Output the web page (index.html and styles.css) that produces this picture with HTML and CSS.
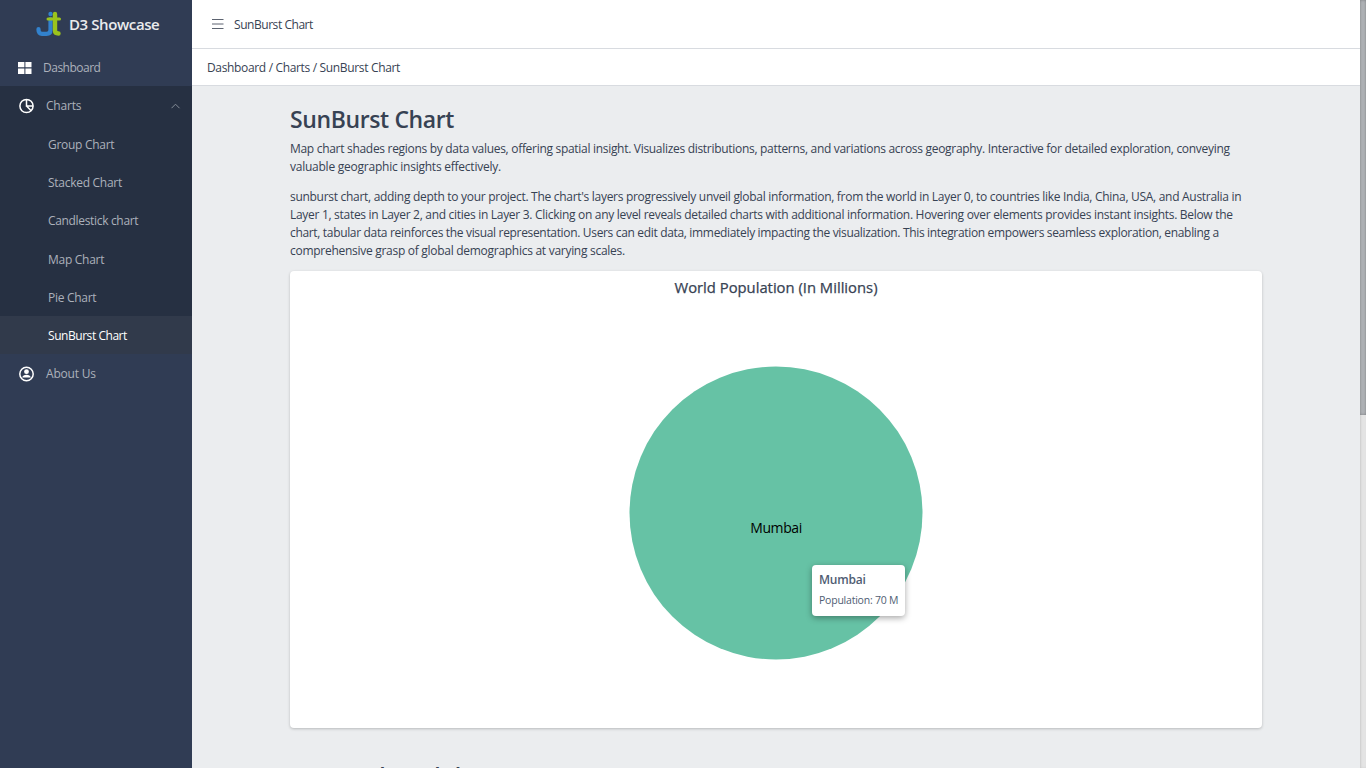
FILE: index.html
```html
<!DOCTYPE html>
<html lang="en">
<head>
<meta charset="utf-8">
<title>D3 Showcase</title>
<link rel="stylesheet" href="styles.css">
</head>
<body>
<div class="app">
  <aside class="sidebar">
    <div class="brand">
      <svg class="logo" width="26" height="26" viewBox="0 0 26 26" fill="none" stroke-linecap="round" stroke-linejoin="round"><path d="M14.500 8V19Q14.500 22.800 10.500 22.800H6Q2.500 22.800 2.500 19V18" stroke="#3282cd" stroke-width="4.200" /><circle cx="14.500" cy="3" r="2.200" fill="#3282cd"/><path d="M19 3V19.500Q19 22.500 22.500 22.500" stroke="#9bc31c" stroke-width="4.400"/><path d="M12 8H23.500" stroke="#9bc31c" stroke-width="3"/></svg>
      <span class="brand-name">D3 Showcase</span>
    </div>
    <nav>
      <a class="item dashboard"><svg width="14" height="12" viewBox="0 0 14 12" fill="#fff"><path d="M0 0h6.400v5.300H0zM7.400 0H13.500v5.300H7.400zM0 6.500h6.400V12H0zM7.400 6.500H13.500V12H7.400z"/></svg><span>Dashboard</span></a>
      <div class="group">
        <a class="item"><svg width="16" height="16" viewBox="0 0 16 16" fill="none" stroke="#fff" stroke-width="1.500"><circle cx="8.500" cy="8" r="6.600"/><path d="M8.500 1.400V8H15.100M8.500 8l4.700 4.700"/></svg><span>Charts</span><svg class="chevron" width="10" height="6" viewBox="0 0 10 6" fill="none" stroke="#858d98"><path d="M0.500 5.200L4.500 1.200L8.500 5.200"/></svg></a>
        <a class="sub">Group Chart</a>
        <a class="sub">Stacked Chart</a>
        <a class="sub candle">Candlestick chart</a>
        <a class="sub">Map Chart</a>
        <a class="sub">Pie Chart</a>
        <a class="sub active">SunBurst Chart</a>
      </div>
      <a class="item"><svg width="16" height="16" viewBox="0 0 16 16"><circle cx="8.500" cy="8" r="6.700" fill="none" stroke="#fff" stroke-width="1.500"/><circle cx="8.500" cy="5.700" r="2.400" fill="#fff"/><path d="M4.200 11.500Q5 8.700 8.500 8.700T12.800 11.500Z" fill="#fff"/></svg><span>About Us</span></a>
    </nav>
  </aside>
  <main class="main">
    <header class="topbar"><svg width="12" height="12" viewBox="0 0 12 12" stroke="#5c6370"><path d="M0 1.500h11.500M0 6h11.500M0 10.500h11.500"/></svg><span>SunBurst Chart</span></header>
    <div class="crumbs">Dashboard / Charts / SunBurst Chart</div>
    <div class="content">
      <h1>SunBurst Chart</h1>
      <p><span class="l1">Map chart shades regions by data values, offering spatial insight. Visualizes distributions, patterns, and variations across geography. Interactive for detailed exploration, conveying</span><br><span class="l2">valuable geographic insights effectively.</span></p>
      <p><span class="l3">sunburst chart, adding depth to your project. The chart's layers progressively unveil global information, from the world in Layer 0, to countries like India, China, USA, and Australia in</span><br><span class="l4">Layer 1, states in Layer 2, and cities in Layer 3. Clicking on any level reveals detailed charts with additional information. Hovering over elements provides instant insights. Below the</span><br><span class="l5">chart, tabular data reinforces the visual representation. Users can edit data, immediately impacting the visualization. This integration empowers seamless exploration, enabling a</span><br><span class="l6">comprehensive grasp of global demographics at varying scales.</span></p>
      <section class="card">
        <h2>World Population (In Millions)</h2>
        <div class="chart">
          <svg width="294" height="294" viewBox="0 0 294 294"><circle cx="147" cy="147" r="146.500" fill="#66c2a5"/><text x="147" y="167" text-anchor="middle" class="chart-label">Mumbai</text></svg>
          <div class="tooltip"><b>Mumbai</b><span>Population: 70 M</span></div>
        </div>
      </section>
      <h3>Source c<span class="wide">hart lab</span></h3>
    </div>
  </main>
  <div class="scrollbar"><div class="thumb"></div></div>
</div>
</body>
</html>
```
FILE: styles.css
```css
* { box-sizing: border-box; }
body { margin: 0; height: 768px; overflow: hidden; font-family: "Open Sans", "Noto Sans", sans-serif; font-size: 12px; line-height: 18px; color: #374253; }
.app { display: flex; height: 768px; overflow: hidden; }
.sidebar { width: 192px; flex: none; background: #303c54; color: #acb1bb; }
.brand { height: 48px; display: flex; align-items: center; padding-left: 36px; gap: 7px; }
.brand-name { color: #eaebed; font-weight: 600; font-size: 15px; letter-spacing: -0.4px; }
.item { display: flex; align-items: center; height: 38px; padding: 1px 0 0 18px; gap: 12px; }
.item > span { padding-top: 1px; letter-spacing: -0.2px; }
.dashboard { gap: 11px; }
.dashboard > span { letter-spacing: -0.5px; }
.chevron { margin-left: auto; margin-right: 11px; }
.group { background: #263042; }
.sub { display: flex; align-items: center; height: 38.340px; padding: 2px 0 0 48px; letter-spacing: -0.280px; }
.candle { letter-spacing: -0.330px; }
.group .item { height: 38.400px; }
.active { background: #313a4b; color: #fff; letter-spacing: -0.450px; height: 38px; }
.main { flex: 1; min-width: 0; background: #ebedef; }
.topbar { height: 49px; background: #fff; border-bottom: 1px solid #d8dbe0; display: flex; align-items: center; padding-left: 20px; gap: 10px; letter-spacing: -0.450px; }
.topbar span { padding-top: 2px; }
.crumbs { height: 37px; background: #fff; border-bottom: 1px solid #d8dbe0; padding: 10px 15px; letter-spacing: -0.340px; }
.content { width: 972px; margin-left: 98px; padding-top: 19px; white-space: nowrap; }
.l1 { letter-spacing: -0.300px; }
.l2 { letter-spacing: -0.240px; }
.l3 { letter-spacing: -0.294px; }
.l4 { letter-spacing: -0.296px; }
.l5 { letter-spacing: -0.332px; }
.l6 { letter-spacing: -0.280px; }
h1 { margin: 0 0 7px; font-size: 23px; line-height: 28px; font-weight: 600; letter-spacing: -0.380px; }
p { margin: 0 0 11px; }
p + p { margin-top: 12px; }
.card { height: 457px; background: #fff; border-radius: 4px; box-shadow: 0 1px 3px rgba(0, 0, 0, .22); }
h2 { margin: 0; padding: 6px 0 1px; font-size: 14.800px; line-height: 20px; font-weight: 400; -webkit-text-stroke: 0.250px; text-align: center; }
.chart { position: relative; display: flex; justify-content: center; padding-top: 68px; }
.chart-label { font-size: 14px; letter-spacing: -0.4px; fill: #000; }
.tooltip { position: absolute; left: 522px; top: 267px; width: 93px; height: 51px; padding: 6px 7px; display: flex; flex-direction: column; gap: 2px; background: #fff; border-radius: 4px; box-shadow: 0 2px 6px rgba(0, 0, 0, .35); color: #4f5d73; font-size: 10.500px; letter-spacing: -0.220px; }
.tooltip b { font-size: 12px; font-weight: 600; }
h3 { margin: 34px 0 0; font-size: 23px; line-height: 28px; font-weight: 600; letter-spacing: -0.500px; }
.wide { letter-spacing: 0.400px; }
.scrollbar { width: 6px; flex: none; background: #e4e4e4; box-shadow: inset 1px 0 2px #ccc; }
.thumb { height: 415px; background: #b0b3b7; box-shadow: inset 0 0 3px rgba(0, 0, 0, .3); }
```
